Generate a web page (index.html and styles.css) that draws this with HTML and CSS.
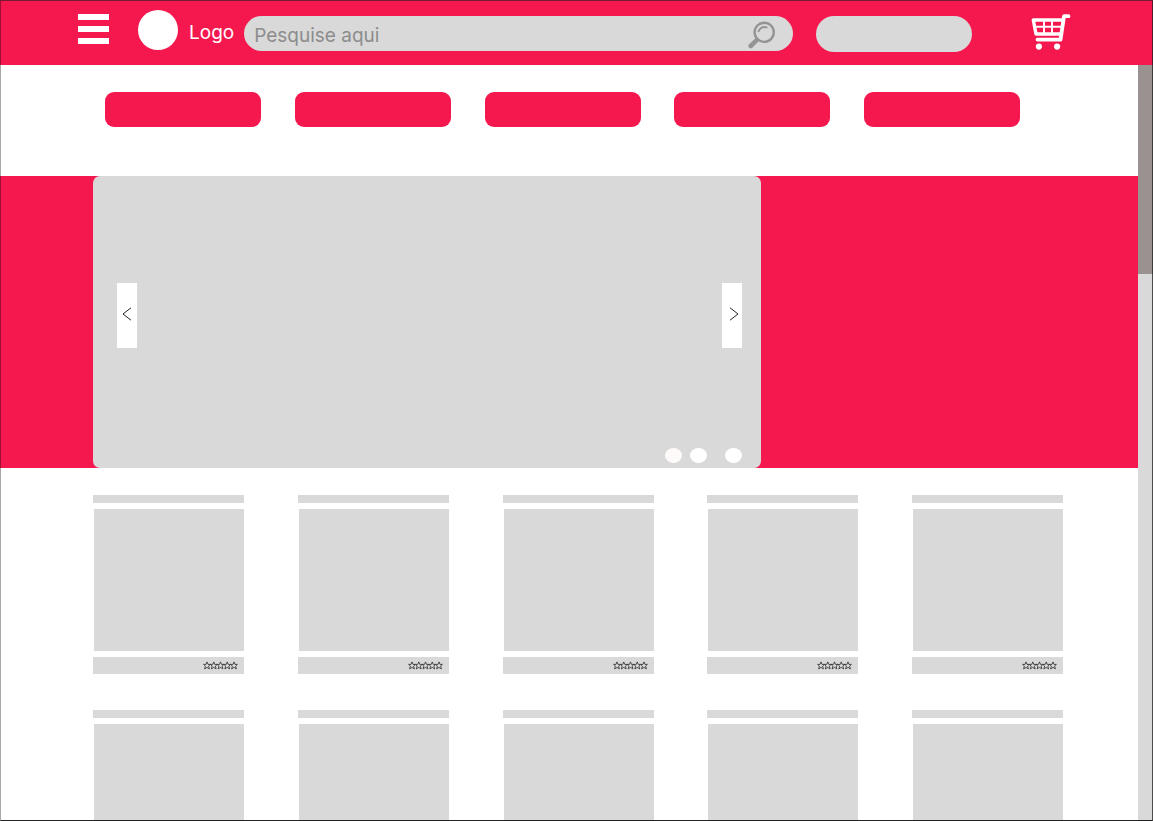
FILE: index.html
```html
<!DOCTYPE html>
<html lang="pt-BR">
<head>
<meta charset="utf-8">
<title>Loja</title>
<link rel="stylesheet" href="styles.css">
</head>
<body>
<svg width="0" height="0" class="symbols" aria-hidden="true">
  <symbol id="stars" viewBox="0 0 35 9">
    <g fill="none" stroke="#2a2a2a" stroke-width=".8">
      <path id="star" d="M4 .9 5 3.4H7.4L5.6 5.1 6.4 7.9 4 6.4 1.6 7.9 2.4 5.1.6 3.4H3Z"/>
      <use href="#star" x="6.75"/><use href="#star" x="13.5"/><use href="#star" x="20.25"/><use href="#star" x="27"/>
    </g>
  </symbol>
</svg>
<div class="screen">
  <header class="header">
    <button class="menu" type="button" aria-label="Menu"><span></span><span></span><span></span></button>
    <a class="brand" href="#"><span class="brand-mark"></span><span class="brand-name">Logo</span></a>
    <form class="search">
      <input class="search-input" type="text" placeholder="Pesquise aqui" aria-label="Pesquise aqui">
      <button class="search-button" type="submit" aria-label="Buscar">
        <svg width="28" height="28" viewBox="0 0 28 28" fill="none" stroke="#949494" stroke-linecap="round">
          <circle cx="16.2" cy="11.3" r="9.6" stroke-width="2.4"/>
          <path d="M10.6 10.2A6 6 0 0 1 18.6 6.4" stroke-width="2"/>
          <path d="M9.4 18.2 8 19.6" stroke-width="2.5"/>
          <path d="M8.2 19.6 2.7 25" stroke-width="4.6"/>
        </svg>
      </button>
    </form>
    <button class="account" type="button" aria-label="Conta"></button>
    <button class="cart" type="button" aria-label="Carrinho">
      <svg width="40" height="37" viewBox="0 0 40 37">
        <g fill="none" stroke="#fff" stroke-linecap="round" stroke-linejoin="round">
          <path d="M37.5 2.2H33L29.5 25.6H6.5" stroke-width="3.8"/>
          <path d="M31 6H2.3L5 20H30" stroke-width="3.4"/>
          <path d="M4 12.8H31M13 6V20M21 6V20" stroke-width="1.9"/>
        </g>
        <circle cx="7.9" cy="32.6" r="3.1" fill="#fff"/>
        <circle cx="26.1" cy="32.6" r="3.1" fill="#fff"/>
      </svg>
    </button>
  </header>
  <div class="body">
    <main class="content">
      <nav class="categories" aria-label="Categorias">
        <button type="button" aria-label="Categoria 1"></button>
        <button type="button" aria-label="Categoria 2"></button>
        <button type="button" aria-label="Categoria 3"></button>
        <button type="button" aria-label="Categoria 4"></button>
        <button type="button" aria-label="Categoria 5"></button>
      </nav>
      <section class="hero">
        <div class="carousel">
          <div class="arrows">
            <button class="arrow" type="button" aria-label="Anterior">
              <svg width="10" height="14" viewBox="0 0 10 14"><path d="M9 .8 1 7 9 13.2" fill="none" stroke="#222"/></svg>
            </button>
            <button class="arrow arrow-next" type="button" aria-label="Próximo">
              <svg width="10" height="14" viewBox="0 0 10 14"><path d="M1 .8 9 7 1 13.2" fill="none" stroke="#222"/></svg>
            </button>
          </div>
          <div class="dots">
            <button class="dot dot-active" type="button" aria-label="Slide 1"></button>
            <button class="dot" type="button" aria-label="Slide 2"></button>
            <button class="dot dot-last" type="button" aria-label="Slide 3"></button>
          </div>
        </div>
      </section>
      <section class="products">
        <article class="card"><div class="card-title"></div><div class="card-image"></div><div class="card-rating"><svg><use href="#stars"/></svg></div></article>
        <article class="card"><div class="card-title"></div><div class="card-image"></div><div class="card-rating"><svg><use href="#stars"/></svg></div></article>
        <article class="card"><div class="card-title"></div><div class="card-image"></div><div class="card-rating"><svg><use href="#stars"/></svg></div></article>
        <article class="card"><div class="card-title"></div><div class="card-image"></div><div class="card-rating"><svg><use href="#stars"/></svg></div></article>
        <article class="card"><div class="card-title"></div><div class="card-image"></div><div class="card-rating"><svg><use href="#stars"/></svg></div></article>
        <article class="card"><div class="card-title"></div><div class="card-image"></div></article>
        <article class="card"><div class="card-title"></div><div class="card-image"></div></article>
        <article class="card"><div class="card-title"></div><div class="card-image"></div></article>
        <article class="card"><div class="card-title"></div><div class="card-image"></div></article>
        <article class="card"><div class="card-title"></div><div class="card-image"></div></article>
      </section>
    </main>
    <div class="scrollbar"><div class="scrollbar-thumb"></div></div>
  </div>
</div>
</body>
</html>
```

FILE: styles.css
```css
:root {
  --red: #f5184f;
  --grey: #d9d9d9;
}

* {
  box-sizing: border-box;
}

body {
  margin: 0;
  background: #fff;
  font-family: Inter, "Liberation Sans", sans-serif;
}

button {
  padding: 0;
  border: 0;
  background: none;
  cursor: pointer;
}

svg {
  display: block;
}

.symbols {
  position: absolute;
}

.screen {
  position: relative;
  display: flex;
  flex-direction: column;
  height: 100vh;
  overflow: hidden;
}

/* Thin window outline over the content */
.screen::after {
  content: "";
  position: absolute;
  inset: 0;
  border: 1px solid;
  border-color: rgba(30, 30, 30, .6) rgba(30, 30, 30, .75) #222 rgba(0, 0, 0, .35);
  pointer-events: none;
}

.header {
  display: flex;
  flex: none;
  align-items: flex-start;
  padding: 10px 82px 13px 78px;
  background: var(--red);
}

.menu {
  display: flex;
  flex-direction: column;
  gap: 6px;
  width: 31px;
  margin: 4px 29px 0 0;
}

.menu span {
  height: 6px;
  background: #fff;
}

.brand {
  display: flex;
  align-items: center;
  gap: 11px;
  margin-right: 10px;
  color: #fff;
  font-size: 19px;
  line-height: 24px;
  text-decoration: none;
}

.brand-mark {
  width: 40px;
  height: 40px;
  border-radius: 50%;
  background: #fff;
}

.brand-name {
  padding-top: 6px;
}

.search {
  display: flex;
  flex: 1;
  align-items: center;
  height: 35px;
  min-width: 0;
  margin: 6px 23px 0 0;
  padding: 0 17px 0 10px;
  border-radius: 18px;
  background: var(--grey);
}

.search-input {
  flex: 1;
  min-width: 0;
  padding: 5px 0 0;
  border: 0;
  outline: 0;
  background: none;
  color: #444;
  font: 19px/24px Inter, "Liberation Sans", sans-serif;
}

.search-input::placeholder {
  color: #8c8c8c;
  opacity: 1;
}

.search-button {
  padding-top: 3px;
}

.account {
  width: 156px;
  height: 36px;
  margin: 6px 59px 0 0;
  border-radius: 18px;
  background: var(--grey);
}

.cart {
  margin-top: 4px;
}

.body {
  display: flex;
  flex: 1;
  min-height: 0;
}

.content {
  flex: 1;
  min-width: 0;
  overflow: hidden;
}

.scrollbar {
  width: 15px;
  background: var(--grey);
}

.scrollbar-thumb {
  height: 209px;
  background: #999291;
}

.categories {
  display: flex;
  justify-content: space-between;
  padding: 27px 118px 49px 105px;
}

.categories button {
  width: 156px;
  height: 35px;
  border-radius: 9px;
  background: var(--red);
}

.hero {
  padding-left: 93px;
  background: var(--red);
}

.carousel {
  display: flex;
  flex-direction: column;
  justify-content: space-between;
  max-width: 668px;
  min-height: 292px;
  padding: 107px 19px 5px 24px;
  border-radius: 7px;
  background: var(--grey);
}

.arrows {
  display: flex;
  justify-content: space-between;
}

.arrow {
  display: flex;
  align-items: center;
  justify-content: center;
  width: 20px;
  height: 65px;
  padding-bottom: 3px;
  background: #fff;
}

.arrow-next {
  padding-left: 4px;
}

.dots {
  display: flex;
  justify-content: flex-end;
  gap: 8px;
}

.dot {
  width: 17px;
  height: 15px;
  border-radius: 50%;
  background: #fff;
}

.dot-active {
  background: #fffafa;
}

.dot-last {
  margin-left: 10px;
}

.products {
  display: grid;
  grid-template-columns: repeat(5, 151px);
  justify-content: space-between;
  row-gap: 36px;
  padding: 27px 75px 27px 93px;
}

.card {
  display: flex;
  flex-direction: column;
  gap: 6px;
}

.card-title {
  height: 8px;
  background: var(--grey);
}

.card-image {
  height: 142px;
  margin-left: 1px;
  background: var(--grey);
}

.card-rating {
  display: flex;
  align-items: center;
  justify-content: flex-end;
  height: 17px;
  padding-right: 6px;
  background: var(--grey);
}

.card-rating svg {
  width: 35px;
  height: 9px;
}
```
